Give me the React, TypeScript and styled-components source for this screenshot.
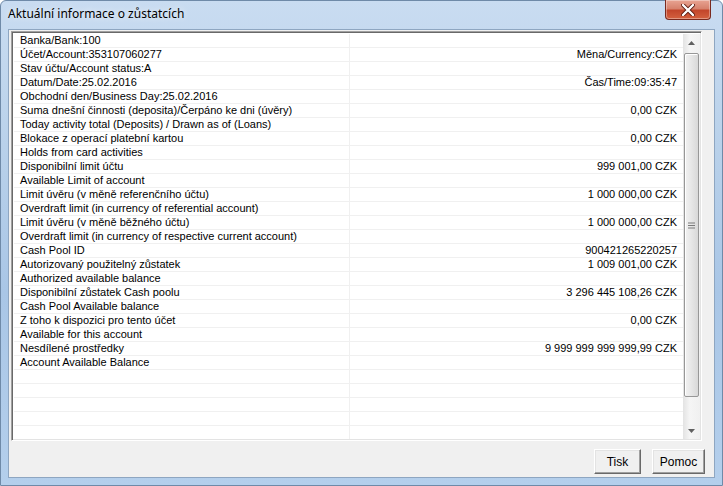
import React from "react";
import styled, { createGlobalStyle } from "styled-components";

const GlobalStyle = createGlobalStyle`
  html, body {
    margin: 0;
    padding: 0;
    background: #ffffff;
  }
  * { box-sizing: border-box; }
`;

type Row = { left: string; right?: string };

const rows: Row[] = [
  { left: "Banka/Bank:100" },
  { left: "Účet/Account:353107060277", right: "Měna/Currency:CZK" },
  { left: "Stav účtu/Account status:A" },
  { left: "Datum/Date:25.02.2016", right: "Čas/Time:09:35:47" },
  { left: "Obchodní den/Business Day:25.02.2016" },
  { left: "Suma dnešní činnosti (deposita)/Čerpáno ke dni (úvěry)", right: "0,00 CZK" },
  { left: "Today activity total (Deposits) / Drawn as of (Loans)" },
  { left: "Blokace z operací platební kartou", right: "0,00 CZK" },
  { left: "Holds from card activities" },
  { left: "Disponibilní limit účtu", right: "999 001,00 CZK" },
  { left: "Available Limit of account" },
  { left: "Limit úvěru (v měně referenčního účtu)", right: "1 000 000,00 CZK" },
  { left: "Overdraft limit (in currency of referential account)" },
  { left: "Limit úvěru (v měně běžného účtu)", right: "1 000 000,00 CZK" },
  { left: "Overdraft limit (in currency of respective current account)" },
  { left: "Cash Pool ID", right: "900421265220257" },
  { left: "Autorizovaný použitelný zůstatek", right: "1 009 001,00 CZK" },
  { left: "Authorized available balance" },
  { left: "Disponibilní zůstatek Cash poolu", right: "3 296 445 108,26 CZK" },
  { left: "Cash Pool Available balance" },
  { left: "Z toho k dispozici pro tento účet", right: "0,00 CZK" },
  { left: "Available for this account" },
  { left: "Nesdílené prostředky", right: "9 999 999 999 999,99 CZK" },
  { left: "Account Available Balance" },
];

const TOTAL_ROWS = 29;

const Window = styled.div`
  width: 723px;
  height: 486px;
  display: flex;
  flex-direction: column;
  background: linear-gradient(180deg, #c9dcf1 0%, #b9d1ea 30%, #a9c6e6 60%, #b4cfec 100%);
  border: 1px solid #6f8aa8;
  border-radius: 6px 6px 0 0;
  padding: 0 7px 7px 7px;
  font-family: "Liberation Sans", Arial, sans-serif;
`;

const TitleBar = styled.div`
  height: 28px;
  display: flex;
  align-items: flex-start;
  justify-content: space-between;
`;

const Title = styled.div`
  padding-top: 4px;
  font-family: "Noto Sans", "Liberation Sans", sans-serif;
  font-size: 12px;
  color: #000;
  text-shadow: 0 0 6px rgba(255, 255, 255, 0.9);
`;

const CloseButton = styled.div`
  width: 46px;
  height: 20px;
  margin-right: 4px;
  margin-top: -1px;
  border: 1px solid #7a2a1e;
  border-top: none;
  border-radius: 0 0 4px 4px;
  background: linear-gradient(180deg, #e8a493 0%, #d7826d 45%, #c3462b 55%, #d4613f 100%);
  box-shadow: inset 0 0 0 1px rgba(255, 255, 255, 0.35);
  display: flex;
  align-items: center;
  justify-content: center;
`;

const Client = styled.div`
  flex: 1;
  display: flex;
  flex-direction: column;
  background: #f0f0f0;
  border: 1px solid #8ea6c1;
  padding: 1px 12px 3px 2px;
`;

const ListBox = styled.div`
  height: 410px;
  display: flex;
  background: #fff;
  border-top: 1px solid #a0a0a0;
  border-left: 1px solid #a0a0a0;
  border-right: 1px solid #ffffff;
  border-bottom: 1px solid #ffffff;
  box-shadow: inset 1px 1px 0 #696969, inset -1px -1px 0 #e3e3e3;
  padding: 2px 1px 1px 2px;
`;

const Grid = styled.div`
  flex: 1;
  overflow: hidden;
`;

const GridRow = styled.div`
  display: grid;
  grid-template-columns: 336px 1fr;
  height: 14px;
  border-bottom: 1px solid #f0f0f0;
  font-size: 11px;
  line-height: 13px;
  color: #000;
`;

const Cell = styled.div<{ $right?: boolean }>`
  padding: 0 6px;
  white-space: nowrap;
  overflow: hidden;
  text-align: ${(p) => (p.$right ? "right" : "left")};
  border-right: ${(p) => (p.$right ? "none" : "1px solid #f0f0f0")};
`;

const ScrollBar = styled.div`
  width: 17px;
  display: flex;
  flex-direction: column;
  background: linear-gradient(90deg, #e3e3e3 0%, #f5f5f5 40%, #f0f0f0 100%);
`;

const Arrow = styled.div`
  height: 17px;
  display: flex;
  align-items: center;
  justify-content: center;
`;

const Track = styled.div`
  flex: 1;
  padding: 2px 1px;
  display: flex;
  flex-direction: column;
  justify-content: flex-start;
`;

const Thumb = styled.div`
  height: 344px;
  border: 1px solid #979797;
  border-radius: 2px;
  background: linear-gradient(90deg, #f2f2f2 0%, #e6e6e6 50%, #d8d8d8 100%);
  box-shadow: inset 1px 1px 0 #fff;
  display: flex;
  align-items: center;
  justify-content: center;
`;

const Footer = styled.div`
  flex: 1;
  display: flex;
  justify-content: flex-end;
  align-items: flex-end;
  gap: 11px;
  margin-right: -3px;
`;

const Button = styled.button<{ $w: number }>`
  width: ${(p) => p.$w}px;
  height: 25px;
  padding: 0;
  background: #f0f0f0;
  border-top: 1px solid #ffffff;
  border-left: 1px solid #ffffff;
  border-right: 1px solid #696969;
  border-bottom: 1px solid #696969;
  box-shadow: inset -1px -1px 0 #a0a0a0, inset 1px 1px 0 #e3e3e3;
  font-family: "Liberation Sans", Arial, sans-serif;
  font-size: 12px;
  color: #000;
`;

export default function App() {
  const all: Row[] = [...rows];
  while (all.length < TOTAL_ROWS) all.push({ left: "" });

  return (
    <>
      <GlobalStyle />
      <Window>
        <TitleBar>
          <Title>Aktuální informace o zůstatcích</Title>
          <CloseButton>
            <svg width="14" height="12" viewBox="0 0 14 12">
              <path
                d="M2 1 L12 11 M12 1 L2 11"
                stroke="#5a1a10"
                strokeWidth="4"
                strokeLinecap="round"
              />
              <path
                d="M2 1 L12 11 M12 1 L2 11"
                stroke="#ffffff"
                strokeWidth="2.4"
                strokeLinecap="round"
              />
            </svg>
          </CloseButton>
        </TitleBar>
        <Client>
          <ListBox>
            <Grid>
              {all.map((r, i) => (
                <GridRow key={i}>
                  <Cell>{r.left}</Cell>
                  <Cell $right>{r.right ?? ""}</Cell>
                </GridRow>
              ))}
            </Grid>
            <ScrollBar>
              <Arrow>
                <svg width="7" height="4" viewBox="0 0 7 4">
                  <path d="M0 4 L3.5 0 L7 4 Z" fill="#606060" />
                </svg>
              </Arrow>
              <Track>
                <Thumb>
                  <svg width="7" height="7" viewBox="0 0 7 7">
                    <path d="M0 1 H7 M0 3.5 H7 M0 6 H7" stroke="#7a7a7a" strokeWidth="1" />
                  </svg>
                </Thumb>
              </Track>
              <Arrow>
                <svg width="7" height="4" viewBox="0 0 7 4">
                  <path d="M0 0 L3.5 4 L7 0 Z" fill="#606060" />
                </svg>
              </Arrow>
            </ScrollBar>
          </ListBox>
          <Footer>
            <Button $w={47}>Tisk</Button>
            <Button $w={53}>Pomoc</Button>
          </Footer>
        </Client>
      </Window>
    </>
  );
}
